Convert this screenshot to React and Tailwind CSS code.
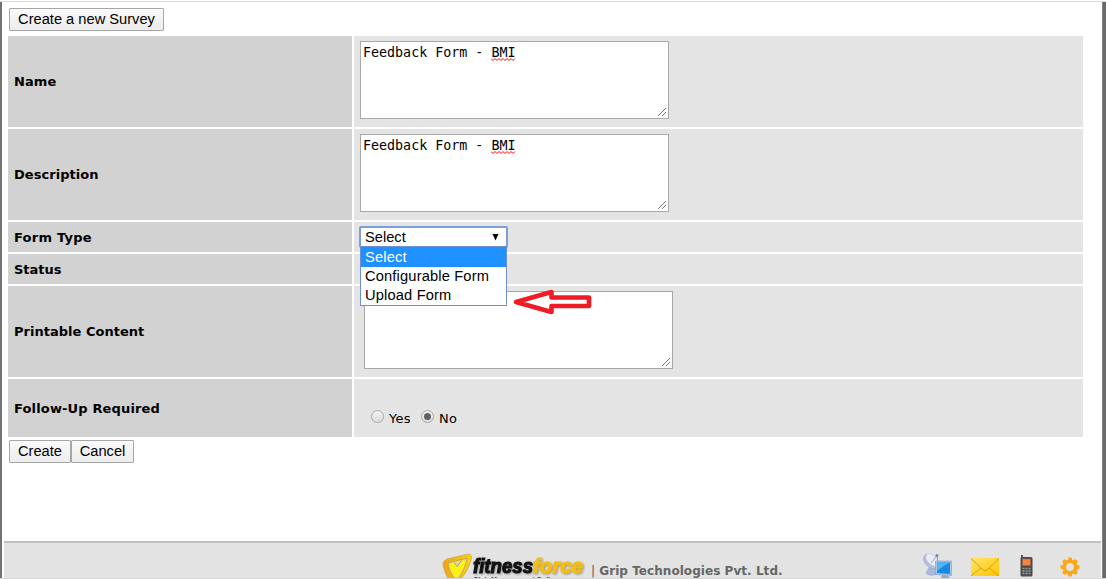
const ROW_LABEL = 'w-[344px] shrink-0 bg-[#d2d2d2] pl-[6px] flex items-center font-bold';
const ROW_FIELD = 'flex-1 bg-[#e4e4e4] relative flex';

function Row({ label, className, labelClass = 'tracking-[0.1px]', children }) {
  return (
    <div className={`flex gap-[2px] ${className}`}>
      <div className={`${ROW_LABEL} ${labelClass}`}>{label}</div>
      <div className={ROW_FIELD}>{children}</div>
    </div>
  );
}

function Button({ className, children }) {
  return (
    <button
      className={`h-[23px] shrink-0 flex items-start justify-center border border-[#a6a6a6] rounded-[1px] bg-linear-to-b from-[#fafafa] to-[#ececec] font-['Liberation_Sans',Arial,sans-serif] text-[14.67px] leading-[20px] whitespace-nowrap ${className}`}
    >
      {children}
    </button>
  );
}

function TextBox({ className, children }) {
  return (
    <div
      className={`relative w-[309px] h-[78px] border border-[#a9a9a9] bg-white px-[2px] pt-[3px] font-['DejaVu_Sans_Mono',monospace] text-[13.33px] leading-[16px] ${className}`}
    >
      {children}
      <svg className="absolute right-[1px] bottom-[1px]" width="10" height="10" viewBox="0 0 10 10" stroke="#777" strokeWidth="1">
        <path d="M1 9 L9 1 M5 9 L9 5" />
      </svg>
    </div>
  );
}

// Word underlined by the spell checker
function Misspelled({ children }) {
  return (
    <span className="relative inline-block">
      {children}
      <svg className="absolute left-0 top-[13px]" width="25" height="3" viewBox="0 0 25 3" fill="none" stroke="#f00" strokeWidth="1">
        <path d="M0 .5 L2 2.500 L4 .5 L6 2.500 L8 .5 L10 2.500 L12 .5 L14 2.500 L16 .5 L18 2.500 L20 .5 L22 2.500 L24 .5" />
      </svg>
    </span>
  );
}

function FormTypeSelect() {
  return (
    <div className="relative ml-[5px] mt-[4px] w-[149px] h-[22px] font-['Liberation_Sans',Arial,sans-serif] text-[14.67px]">
      <div className="h-[22px] border-2 border-[#7b9fda] rounded-[2px] bg-white pl-[4px] pr-[7px] flex items-center justify-between leading-[18px]">
        Select
        <svg width="7" height="7" viewBox="0 0 7 7"><path d="M.5 0 H6.500 L3.500 6.500 Z" /></svg>
      </div>
      <div className="absolute z-10 left-[1px] top-[20px] w-[147px] h-[60px] border border-[#6d90cf] bg-white leading-[19px] tracking-[0.16px]">
        <div className="h-[20px] pl-[4px] bg-[#1e90ff] text-white leading-[20px]">Select</div>
        <div className="h-[19px] pl-[4px]">Configurable Form</div>
        <div className="h-[19px] pl-[4px]">Upload Form</div>
      </div>
      {/* Pointer to the upload option */}
      <svg className="absolute z-10 left-[154px] top-[63px]" width="80" height="26" viewBox="0 0 80 26">
        <path d="M3 13 L38.500 3 V8.500 H76 V17 H38.500 V23 Z" fill="white" stroke="#ee1c25" strokeWidth="4.600" strokeLinejoin="round" />
      </svg>
    </div>
  );
}

function Radio({ checked, label }) {
  return (
    <span className="flex items-start">
      <span className="w-[13px] h-[13px] rounded-full border border-[#a8a8a8] bg-linear-to-b from-[#f2f2f2] to-[#dcdcdc] flex items-center justify-center">
        {checked && <span className="w-[7px] h-[7px] rounded-full bg-[#606060]" />}
      </span>
      <span className="ml-[5px] pt-px leading-[16px] tracking-[0.3px]">{label}</span>
    </span>
  );
}

function Logo() {
  return (
    <svg width="146" height="26" viewBox="0 0 146 26" className="shrink-0">
      <defs>
        <linearGradient id="shield" x1="0" y1="0" x2="1" y2="0">
          <stop offset="0" stopColor="#eea318" />
          <stop offset="1" stopColor="#fbd207" />
        </linearGradient>
      </defs>
      <path d="M1 12 Q0 8 5 6 L26 1 Q31 1 29 7 Q26 18 19 26 H6 Q2 18 1 12Z" fill="url(#shield)" stroke="#c2a75e" strokeWidth=".7" />
      <path d="M6 10 L25 5 Q23 16 17 25 H12 Q7 18 6 10Z" fill="#e9d98c" stroke="#b9a963" strokeWidth="1" />
      <path d="M7 11 L12 9.500 L15 14 L20 7.500 L24 8 Q21 18 15.500 24.500 H13 Q8 18 7 11Z" fill="#fbf30e" />
      <path d="M12.500 9.500 L15 13.500 L19.500 7.500" fill="none" stroke="#aaa68e" strokeWidth="1" />
      <g
        className="drop-shadow-[1px_1px_1px_rgba(0,0,0,0.35)]"
        fontFamily="'Liberation Sans', sans-serif"
        fontWeight="bold"
        fontStyle="italic"
        fontSize="20"
        strokeWidth="1.100"
      >
        <text x="31" y="19.500" fill="#111" stroke="#111" textLength="60" lengthAdjust="spacingAndGlyphs">fitness</text>
        <text x="91" y="19.500" fill="#f5bd13" stroke="#f5bd13" textLength="50" lengthAdjust="spacingAndGlyphs">force</text>
      </g>
      <text x="31" y="29" fill="#444" fontFamily="'Liberation Sans', sans-serif" fontWeight="bold" fontSize="8" textLength="94" lengthAdjust="spacingAndGlyphs">Club Management Software</text>
    </svg>
  );
}

function SatelliteIcon() {
  return (
    <svg width="30" height="26" viewBox="0 0 30 26">
      <path d="M7 14 L3 21 Q7 25 14 22 L12 14Z" fill="#a9b9dc" stroke="#94a4c8" strokeWidth=".6" />
      <ellipse cx="8.500" cy="9.500" rx="6" ry="9" transform="rotate(-48 8.500 9.500)" fill="#b5c0d9" stroke="#97a4c0" strokeWidth=".7" />
      <ellipse cx="9.500" cy="8" rx="4.500" ry="7.800" transform="rotate(-48 9.500 8)" fill="#e8ecf4" />
      <path d="M8 11 L14 3.500 L15 12" fill="none" stroke="#8591ac" strokeWidth=".8" />
      <circle cx="14" cy="3.500" r="1.500" fill="#7b88a6" />
      <path d="M12.500 9 H28.500 V23.500 L12.500 22.500Z" fill="#a9c4e8" stroke="#86a3cf" strokeWidth=".7" />
      <path d="M14 10.500 H27 V22 L14 21Z" fill="#1789df" />
      <path d="M14 10.500 H26.500 Q20 14 14 19Z" fill="#55b4f0" />
      <path d="M19 23 L25 23.500 L27 26 H18Z" fill="#8fa8d4" />
    </svg>
  );
}

function MailIcon() {
  return (
    <svg width="28" height="18" viewBox="0 0 28 18">
      <defs>
        <linearGradient id="mail" x1="0" y1="0" x2="1" y2="1">
          <stop offset="0" stopColor="#ffe56a" />
          <stop offset="1" stopColor="#ffc400" />
        </linearGradient>
      </defs>
      <rect width="28" height="18" fill="url(#mail)" />
      <path d="M0 .5 L12 12 Q14 13.500 16 12 L28 .5 M0 18 L10 10 M28 18 L18 10" fill="none" stroke="#d6a400" strokeWidth="1" />
    </svg>
  );
}

function PhoneIcon() {
  return (
    <svg width="13" height="22" viewBox="0 0 13 22">
      <rect x="1" width="2" height="5" fill="#555" />
      <rect x=".5" y="2" width="12" height="19.500" rx="1.500" fill="#4b4b4b" />
      <rect x="2.500" y="4" width="8" height="6.500" fill="#f5843c" stroke="#a9673f" strokeWidth=".6" />
      <path d="M2.500 13.500 H10.500 M2.500 16 H10.500 M2.500 18.500 H10.500" stroke="#999" strokeWidth="1.300" strokeDasharray="2 1" />
    </svg>
  );
}

function GearIcon() {
  const teeth = [0, 45, 90, 135, 180, 225, 270, 315];
  return (
    <svg width="20" height="20" viewBox="0 0 20 20">
      <g fill="#faa819">
        {teeth.map((angle) => (
          <rect key={angle} x="8" y=".5" width="4" height="5" rx="1" transform={`rotate(${angle} 10 10)`} />
        ))}
      </g>
      <circle cx="10" cy="10" r="5.700" fill="none" stroke="#faa819" strokeWidth="3.600" />
    </svg>
  );
}

export default function App() {
  return (
    <div className="w-[1106px] h-[579px] overflow-hidden flex flex-col bg-white text-black font-['DejaVu_Sans',Verdana,sans-serif] text-[13px]">
      <div className="h-[2px] shrink-0 border-b border-[#d9dbdb]" />

      <div className="h-[576px] flex">
        <div className="w-[2px] shrink-0 bg-[#727274]" />

        <div className="w-[1100px] flex flex-col">
          <div className="h-[34px] pl-[7px] pt-[6px]">
            <Button className="w-[155px]">Create a new Survey</Button>
          </div>

          <div className="ml-[6px] w-[1075px] flex flex-col gap-[2px]">
            <Row label="Name" className="h-[91px]">
              <TextBox className="ml-[6px] mt-[5px]">
                Feedback Form - <Misspelled>BMI</Misspelled>
              </TextBox>
            </Row>
            <Row label="Description" className="h-[91px]" labelClass="tracking-[0.05px]">
              <TextBox className="ml-[6px] mt-[5px]">
                Feedback Form - <Misspelled>BMI</Misspelled>
              </TextBox>
            </Row>
            <Row label="Form Type" className="h-[30px]" labelClass="pt-[2px] tracking-[0.25px]">
              <FormTypeSelect />
            </Row>
            <Row label="Status" className="h-[30px]" labelClass="pt-[2px]" />
            <Row label="Printable Content" className="h-[91px]" labelClass="tracking-[0.02px]">
              <TextBox className="ml-[10px] mt-[5px]" />
            </Row>
            <Row label="Follow-Up Required" className="h-[58px]" labelClass="pt-[2px] tracking-[0.15px]">
              <div className="flex gap-[10px] ml-[17px] mt-[31px]">
                <Radio label="Yes" />
                <Radio label="No" checked />
              </div>
            </Row>
          </div>

          <div className="flex pl-[7px] pt-[3px]">
            <Button className="w-[62px]">Create</Button>
            <Button className="w-[63px]">Cancel</Button>
          </div>

          {/* Footer */}
          <div className="mt-auto ml-[2px] w-[1097px] h-[37px] border-t-2 border-[#c0c0c0] bg-[#e3e3e3] flex items-start overflow-hidden">
            <div className="flex ml-[438px] pt-[10px]">
              <Logo />
              <span className="ml-[3px] pt-[10px] text-[12px] leading-[16px] font-bold text-[#666] whitespace-nowrap tracking-[0.05px]">
                <span className="font-normal text-[#555]">|</span> Grip Technologies Pvt. Ltd.
              </span>
            </div>
            <div className="ml-auto flex items-start pr-[21px]">
              <div className="mt-[9px]"><SatelliteIcon /></div>
              <div className="mt-[15px] ml-[18px]"><MailIcon /></div>
              <div className="mt-[12px] ml-[21px]"><PhoneIcon /></div>
              <div className="mt-[14px] ml-[27px]"><GearIcon /></div>
            </div>
          </div>
        </div>

        <div className="w-[4px] shrink-0 border-l border-[#858585] bg-[#68696b]" />
      </div>

      <div className="h-px shrink-0 bg-[#d9d9dc]" />
    </div>
  );
}
